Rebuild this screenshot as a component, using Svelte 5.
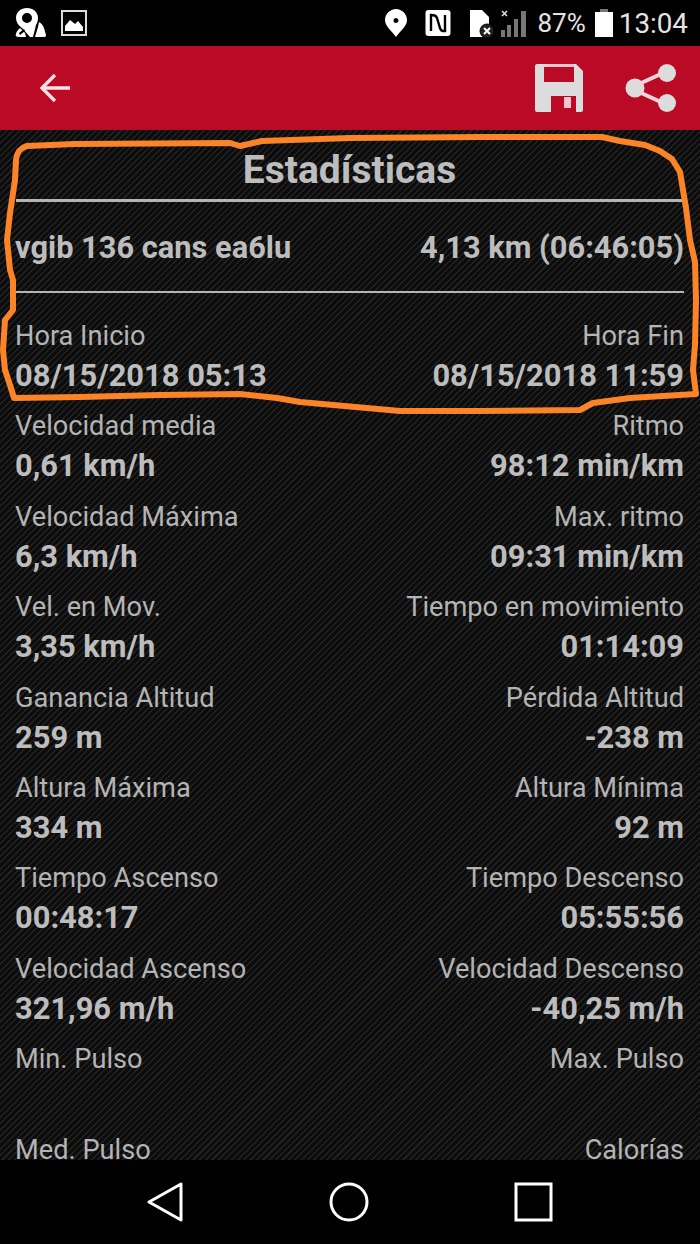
<script lang="ts">
	interface Stat {
		left: string;
		leftValue: string;
		right: string;
		rightValue: string;
	}

	const stats: Stat[] = [
		{ left: 'Hora Inicio', leftValue: '08/15/2018 05:13', right: 'Hora Fin', rightValue: '08/15/2018 11:59' },
		{ left: 'Velocidad media', leftValue: '0,61 km/h', right: 'Ritmo', rightValue: '98:12 min/km' },
		{ left: 'Velocidad Máxima', leftValue: '6,3 km/h', right: 'Max. ritmo', rightValue: '09:31 min/km' },
		{ left: 'Vel. en Mov.', leftValue: '3,35 km/h', right: 'Tiempo en movimiento', rightValue: '01:14:09' },
		{ left: 'Ganancia Altitud', leftValue: '259 m', right: 'Pérdida Altitud', rightValue: '-238 m' },
		{ left: 'Altura Máxima', leftValue: '334 m', right: 'Altura Mínima', rightValue: '92 m' },
		{ left: 'Tiempo Ascenso', leftValue: '00:48:17', right: 'Tiempo Descenso', rightValue: '05:55:56' },
		{ left: 'Velocidad Ascenso', leftValue: '321,96 m/h', right: 'Velocidad Descenso', rightValue: '-40,25 m/h' },
		{ left: 'Min. Pulso', leftValue: '\u00a0', right: 'Max. Pulso', rightValue: '\u00a0' },
		{ left: 'Med. Pulso', leftValue: '\u00a0', right: 'Calorías', rightValue: '\u00a0' }
	];
</script>

<div class="screen">
	<header class="status">
		<div class="status-left">
			<svg width="32" height="30" viewBox="0 0 32 30">
				<path fill="#fff" fill-rule="evenodd" d="M12 0c6 0 11 4 11 10 0 3-1 5-2 7l-3 12h-3L7 20C3 17 1 14 1 10 1 4 6 0 12 0zm0 5a5 5 0 1 0 0 10 5 5 0 0 0 0-10z" />
				<path fill="#fff" d="M24 14c2 1 4 3 5 6l2 7c0 2-1 2-3 2h-8l3-10zM5 20l5 5 1 4H4c-3 0-4-1-3-3 0-2 2-4 4-6z" />
				<path fill="#000" d="M4 25l5-4 1 2-5 4z" />
			</svg>
			<svg width="26" height="26" viewBox="0 0 26 26">
				<rect x="1" y="1" width="24" height="24" fill="none" stroke="#ddd" stroke-width="2" />
				<path fill="#fff" d="M4 21v-5l5-6 5 4 3-3 5 6v4z" />
			</svg>
		</div>
		<div class="status-right">
			<svg class="pin" width="24" height="28" viewBox="0 0 24 28">
				<path fill="#fff" fill-rule="evenodd" d="M12 0c6 0 11 5 11 11 0 6-6 10-11 17C7 21 1 17 1 11 1 5 6 0 12 0zm0 9a2.5 2.5 0 1 0 0 5 2.5 2.5 0 0 0 0-5z" />
			</svg>
			<svg class="nfc" width="26" height="28" viewBox="0 0 26 28">
				<rect x="0.5" y="1" width="25" height="26" rx="3" fill="#fff" />
				<path fill="none" stroke="#000" stroke-width="2.4" d="M6 22V6c3 0 5 0 6 3l3 10c1 3 2 3 5 3V6" />
			</svg>
			<svg class="sim" width="26" height="30" viewBox="0 0 26 30">
				<path fill="#fff" d="M1 9h0V3c0-1 0-1 1-1h11l7 7v20H2c-1 0-1 0-1-1z" />
				<circle cx="18" cy="23" r="7" fill="#222" stroke="#000" stroke-width="1" />
				<path stroke="#fff" stroke-width="2" d="M15 20l6 6M21 20l-6 6" />
			</svg>
			<svg class="signal" width="30" height="30" viewBox="0 0 30 30">
				<path stroke="#ddd" stroke-width="1.6" d="M2 3l5 5M7 3l-5 5" />
				<path fill="#777" d="M1 22h4v7H1zM7 17h4v12H7zM14 11h4v18h-4zM21 3h5v26h-5z" />
			</svg>
			<span class="percent">87%</span>
			<svg class="battery" width="18" height="28" viewBox="0 0 18 28">
				<path fill="#777" d="M5 0h8v3H5z" />
				<path fill="#fff" d="M0 3h18v25H0z" />
			</svg>
			<span class="clock">13:04</span>
		</div>
	</header>

	<nav class="appbar">
		<svg class="back" width="33" height="32" viewBox="0 0 33 32">
			<path fill="none" stroke="#f7dfe3" stroke-width="3.4" d="M32 16H4M17 3L4 16l13 13" />
		</svg>
		<div class="actions">
			<svg width="48" height="48" viewBox="0 0 48 48">
				<path fill="#dcdcdc" fill-rule="evenodd" d="M2 0h39l7 7v39c0 1-1 2-2 2H2c-1 0-2-1-2-2V2C0 1 1 0 2 0zm7 3v15h30V3zM16 32v16h25V32z" />
				<path fill="#f6c5cd" d="M11 0h28v3H11zM29 33h7v11h-7z" />
			</svg>
			<svg width="52" height="48" viewBox="0 0 52 48">
				<g fill="#dcdcdc">
					<circle cx="10" cy="24" r="9.5" />
					<circle cx="42" cy="9" r="9" />
					<circle cx="42" cy="39" r="9" />
				</g>
				<path stroke="#f4d4d9" stroke-width="4" d="M14 20l24-11M14 28l24 11" />
			</svg>
		</div>
	</nav>

	<main class="content">
		<h1>Estadísticas</h1>
		<div class="rule thick"></div>
		<div class="track">
			<span>vgib 136 cans ea6lu</span>
			<span>4,13 km (06:46:05)</span>
		</div>
		<div class="rule"></div>
		<div class="stats">
			{#each stats as s}
				<div class="stat">
					<div class="label">{s.left}</div>
					<div class="label right">{s.right}</div>
					<div class="value">{s.leftValue}</div>
					<div class="value right">{s.rightValue}</div>
				</div>
			{/each}
		</div>
	</main>

	<footer class="softkeys">
		<svg width="38" height="40" viewBox="0 0 38 40">
			<path fill="none" stroke="#fff" stroke-width="3" stroke-linejoin="round" d="M35 2v36L3 20z" />
		</svg>
		<svg width="40" height="40" viewBox="0 0 40 40">
			<ellipse cx="20" cy="20" rx="18" ry="18" fill="none" stroke="#fff" stroke-width="3" />
		</svg>
		<svg width="40" height="40" viewBox="0 0 40 40">
			<rect x="2" y="2" width="35" height="36" fill="none" stroke="#fff" stroke-width="3" />
		</svg>
	</footer>

	<!-- hand drawn marker over the screenshot -->
	<svg class="marker" width="700" height="1244" viewBox="0 0 700 1244">
		<path
			fill="none"
			stroke="#fb8429"
			stroke-width="6"
			stroke-linejoin="round"
			stroke-linecap="round"
			d="M15 180L16 160C17 152 20 148 27 146L75 144 230 143 240 146 262 141 350 138 480 137 602 137 620 141 645 145 660 151 672 159 680 172 683 190 686 208 690 240 695 262 696 300 695 345 693 370 696 394 630 398 593 403 580 410 480 411 400 411 300 402 277 398 240 394 160 395 80 397 14 398 10 385 5 370 3 350 5 320 13 310 13 280 10 270 7 240 10 213z"
		/>
	</svg>
</div>

<style>
	:global(body) {
		margin: 0;
		background: #000;
	}

	.screen {
		position: relative;
		width: 700px;
		height: 1244px;
		display: flex;
		flex-direction: column;
		overflow: hidden;
		font-family: Roboto, 'Liberation Sans', sans-serif;
		background: #000;
	}

	.status {
		height: 46px;
		flex: none;
		display: flex;
		align-items: center;
		justify-content: space-between;
		padding: 0 12px 0 15px;
		box-sizing: border-box;
	}

	.status-left {
		display: flex;
		align-items: center;
		gap: 14px;
	}

	.status-right {
		display: flex;
		align-items: center;
		color: #e4e4e4;
	}

	.pin {
		margin-right: 17px;
	}

	.nfc {
		margin-right: 18px;
	}

	.sim {
		margin-right: 5px;
	}

	.signal {
		margin-right: 7px;
	}

	.percent {
		font-size: 26px;
		margin-right: 9px;
	}

	.battery {
		margin-right: 6px;
	}

	.clock {
		font-size: 27.8px;
	}

	.appbar {
		height: 84px;
		flex: none;
		background: #bb0a25;
		display: flex;
		align-items: center;
		justify-content: space-between;
		padding: 0 23px 0 38px;
		box-sizing: border-box;
	}

	.actions {
		display: flex;
		align-items: center;
		gap: 42px;
	}

	.content {
		flex: 1;
		min-height: 0;
		overflow: hidden;
		padding: 0 16px 0 15px;
		color: #bdbdbd;
		background-color: #121212;
		background-image: repeating-linear-gradient(135deg, #222 0 1.5px, #0c0c0c 1.5px 4.5px);
	}

	h1 {
		margin: 0;
		height: 69px;
		line-height: 80px;
		text-align: center;
		font-size: 39px;
		font-weight: 700;
	}

	.rule {
		height: 2px;
		margin-left: 1px;
		background: #b5b5b5;
	}

	.rule.thick {
		height: 3px;
	}

	.track {
		display: flex;
		justify-content: space-between;
		height: 89px;
		line-height: 92px;
		font-size: 30.8px;
		font-weight: 700;
	}

	.stats {
		padding-top: 24px;
	}

	.stat {
		display: grid;
		grid-template-columns: 1fr auto;
		grid-template-rows: 39px 40px;
		height: 90.4px;
	}

	.label {
		font-size: 27.2px;
		line-height: 38px;
		color: #b4b4b4;
	}

	.value {
		font-size: 30.85px;
		line-height: 40px;
		font-weight: 700;
		white-space: nowrap;
	}

	.right {
		text-align: right;
	}

	.softkeys {
		height: 84px;
		flex: none;
		background: #000;
		display: flex;
		align-items: center;
		padding-left: 146px;
		gap: 145px;
	}

	.marker {
		position: absolute;
		inset: 0;
		pointer-events: none;
	}
</style>
